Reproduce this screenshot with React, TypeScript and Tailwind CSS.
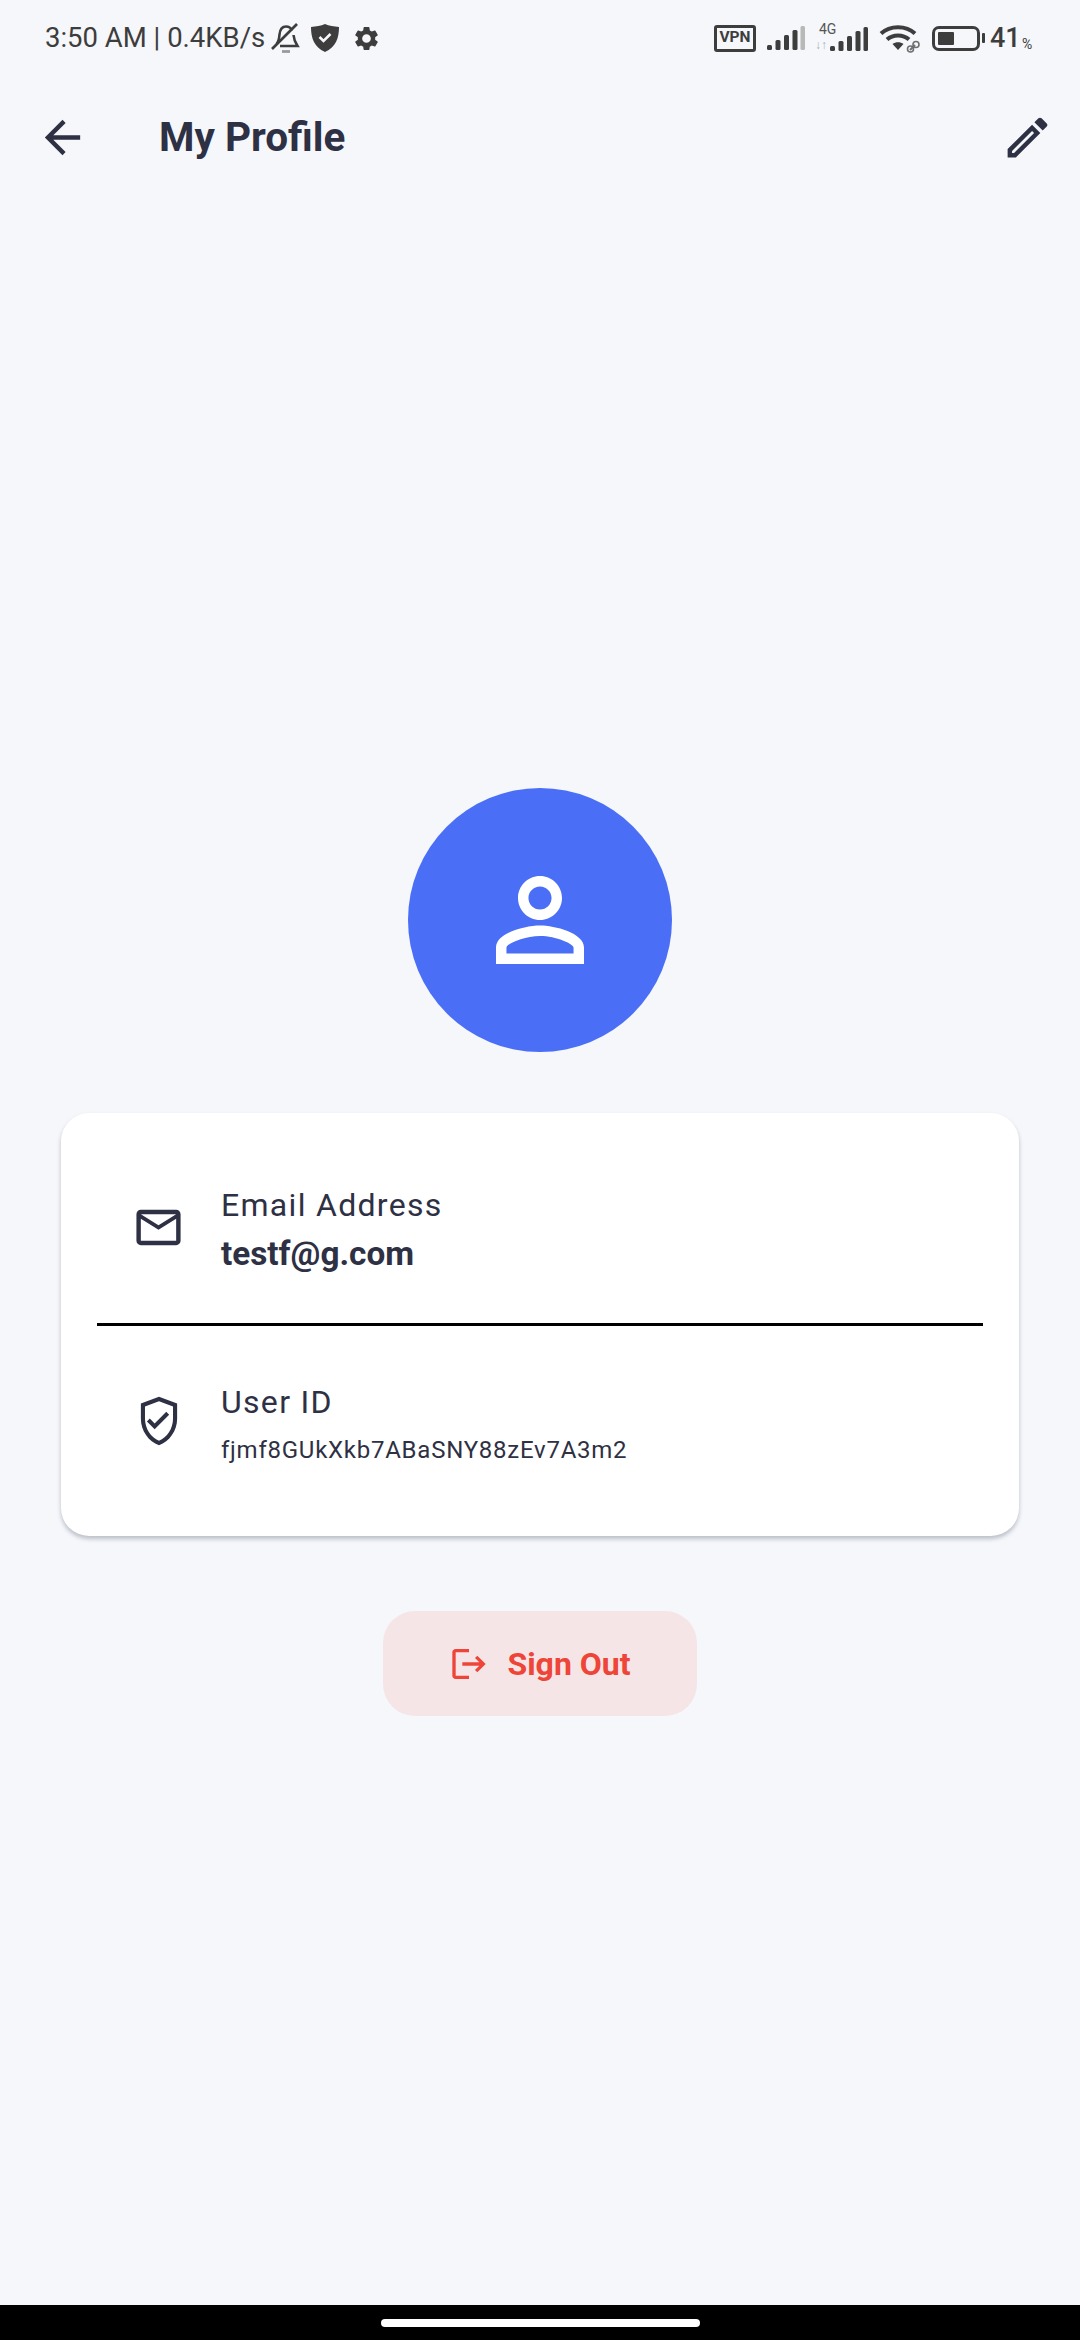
import React from 'react';

const Svg24 = ({ d, className }: { d: string; className: string }) => (
  <svg viewBox="0 0 24 24" fill="currentColor" className={className}>
    <path d={d} />
  </svg>
);

function BellOff() {
  return (
    <svg viewBox="0 0 30 32" className="w-[30px] h-[32px]" fill="none" stroke="#3d3d3d" strokeWidth="2.6">
      <path d="M6.500 22c2.500-3 2.700-6 3-9.500C10 7.500 12 4.500 16 4.500c3 0 5 1.500 6 4" />
      <path d="M23.500 13c.3 4 1.500 7 4 11H10" />
      <path d="M2 27 27 2" />
      <path d="M12 29.500h8" stroke="#9a9a9a" strokeWidth="2.800" />
    </svg>
  );
}

function StatusShield() {
  return (
    <svg viewBox="0 0 30 30" className="w-[30px] h-[30px]">
      <path d="M15 1c4 2 9 2.500 14 3 0 11-3 20-14 25C4 24 1 15 1 4c5-.5 10-1 14-3z" fill="#3d3d3d" />
      <path d="m9.500 14 4 4 7-7" fill="none" stroke="#f5f7fb" strokeWidth="2.500" />
    </svg>
  );
}

function Gear() {
  return (
    <Svg24
      className="w-[29px] h-[29px] text-[#3d3d3d]"
      d="M19.140 12.940c.04-.3.06-.61.06-.94 0-.32-.02-.64-.07-.94l2.030-1.580a.49.49 0 0 0 .12-.61l-1.920-3.320a.49.49 0 0 0-.59-.22l-2.390.96c-.5-.38-1.030-.7-1.620-.94l-.36-2.540a.48.48 0 0 0-.48-.41h-3.840a.47.47 0 0 0-.47.41l-.36 2.540c-.59.24-1.130.57-1.620.94l-2.390-.96a.48.48 0 0 0-.59.22L2.740 8.870a.47.47 0 0 0 .12.61l2.030 1.580c-.05.3-.09.63-.09.94s.02.64.07.94l-2.030 1.580a.49.49 0 0 0-.12.61l1.920 3.320c.12.22.37.29.59.22l2.390-.96c.5.38 1.030.7 1.620.94l.36 2.540c.05.24.24.41.48.41h3.840c.24 0 .44-.17.47-.41l.36-2.540c.59-.24 1.130-.56 1.620-.94l2.390.96c.22.08.47 0 .59-.22l1.920-3.320a.47.47 0 0 0-.12-.61l-2.010-1.580zM12 15.600A3.610 3.610 0 0 1 8.400 12 3.610 3.610 0 0 1 12 8.400a3.610 3.610 0 0 1 3.600 3.600 3.610 3.610 0 0 1-3.600 3.600z"
    />
  );
}

function Bars({ dimLast, className }: { dimLast?: boolean; className: string }) {
  return (
    <svg viewBox="0 0 38 24" className={className} fill="#3d3d3d">
      <rect x="0" y="19" width="5" height="5" rx="1.500" />
      <rect x="8.500" y="14" width="5" height="10" rx="1.500" />
      <rect x="17" y="9" width="5" height="15" rx="1.500" />
      <rect x="25.500" y="4" width="5" height="20" rx="1.500" />
      <rect x="33.500" y="0" width="4.500" height="24" rx="1.500" fill={dimLast ? '#b8b8b8' : '#3d3d3d'} />
    </svg>
  );
}

function Wifi() {
  return (
    <svg viewBox="0 0 42 30" className="w-[42px] h-[30px]" fill="none">
      <path d="M2 10.500C11 2 27 2 36 10.500" stroke="#3d3d3d" strokeWidth="4" />
      <path d="M8 16.500c6-5.500 16-5.500 22 0" stroke="#3d3d3d" strokeWidth="4" />
      <path d="M13.500 21c3-2.500 8-2.500 11 0L19 27z" fill="#3d3d3d" />
      <path d="m31 27 5-5" stroke="#707070" strokeWidth="2" />
      <circle cx="31.500" cy="26" r="3" stroke="#707070" strokeWidth="1.600" />
      <circle cx="37" cy="21.500" r="3" stroke="#707070" strokeWidth="1.600" />
    </svg>
  );
}

function StatusBar() {
  return (
    <div className="h-[76px] flex items-center justify-between pl-[45px] pr-[46px] text-[#3d3d3d]">
      <div className="flex items-center">
        <span className="text-[27.500px] leading-none w-[225px] whitespace-nowrap">3:50 AM | 0.4KB/s</span>
        <BellOff />
        <span className="ml-[10px]"><StatusShield /></span>
        <span className="ml-[12px]"><Gear /></span>
      </div>
      <div className="flex items-center">
        <div className="w-[42px] h-[27px] border-[3px] border-[#3d3d3d] rounded-[3px] flex items-center justify-center text-[15.500px] leading-none font-bold">VPN</div>
        <Bars dimLast className="w-[38px] h-[24px] ml-[11px]" />
        <div className="relative w-[53px] h-[26px] ml-[10px]">
          <span className="absolute left-[4px] -top-[3px] text-[14px] leading-none text-[#555555]">4G</span>
          <span className="absolute left-0 bottom-0 text-[12px] leading-none text-[#b0b0b0]">↓↑</span>
          <Bars className="absolute right-0 bottom-0 w-[38px] h-[24px]" />
        </div>
        <span className="ml-[11px]"><Wifi /></span>
        <div className="ml-[11px] w-[48px] h-[25px] border-[3px] border-[#3d3d3d] rounded-[7px] p-[3px]">
          <div className="w-[44%] h-full bg-[#3d3d3d] rounded-[1px]" />
        </div>
        <div className="ml-[2px] w-[3px] h-[10px] bg-[#3d3d3d] rounded-[1px]" />
        <span className="ml-[5px] w-[30px] text-[27px] leading-none font-medium">41</span>
        <span className="ml-[2px] w-[12px] text-[14px] leading-none self-end mb-[2px]">%</span>
      </div>
    </div>
  );
}

export default function App() {
  return (
    <div className="w-[1080px] h-[2340px] flex flex-col bg-[#f5f7fb] text-[#2e3044] font-['Roboto',sans-serif]">
      <StatusBar />

      <div className="h-[122px] flex items-center justify-between pl-[36px] pr-[26px]">
        <div className="flex items-center">
          <Svg24 className="w-[53px] h-[53px]" d="M20 11H7.830l5.590-5.590L12 4l-8 8 8 8 1.410-1.410L7.830 13H20v-2z" />
          <h1 className="ml-[70px] text-[40.500px] leading-none font-bold">My Profile</h1>
        </div>
        <Svg24
          className="w-[53px] h-[53px]"
          d="M14.060 9.020l.92.92L5.920 19H5v-.92l9.060-9.060M17.660 3c-.25 0-.51.1-.7.29l-1.830 1.830 3.750 3.750 1.830-1.830c.39-.39.39-1.020 0-1.410l-2.340-2.340c-.2-.2-.45-.29-.71-.29zm-3.600 3.190L3 17.250V21h3.750L17.810 9.940l-3.750-3.750z"
        />
      </div>

      <div className="flex-1 flex flex-col items-center pt-[590px]">
        <div className="w-[264px] h-[264px] rounded-full bg-[#4a6ef6] flex items-center justify-center text-white">
          <Svg24
            className="w-[132px] h-[132px]"
            d="M12 5.900c1.160 0 2.100.94 2.100 2.100s-.94 2.100-2.100 2.100S9.900 9.160 9.900 8s.94-2.100 2.100-2.100m0 9c2.970 0 6.100 1.460 6.100 2.100v1.100H5.900V17c0-.64 3.130-2.100 6.100-2.100M12 4C9.790 4 8 5.790 8 8s1.790 4 4 4 4-1.790 4-4-1.790-4-4-4zm0 9c-2.670 0-8 1.340-8 4v3h16v-3c0-2.660-5.330-4-8-4z"
          />
        </div>

        <div className="mt-[61px] w-[958px] h-[423px] bg-white rounded-[28px] px-[36px] shadow-[0_3px_4px_rgba(40,45,70,0.28)]">
          <div className="h-[210px] flex items-center pl-[35px] pt-[22px]">
            <Svg24
              className="w-[53px] h-[53px] shrink-0 mb-[4px]"
              d="M20 4H4c-1.100 0-1.990.9-1.990 2L2 18c0 1.100.9 2 2 2h16c1.100 0 2-.9 2-2V6c0-1.100-.9-2-2-2zm0 14H4V8l8 5 8-5v10zm-8-7L4 6h16l-8 5z"
            />
            <div className="ml-[36px] flex flex-col">
              <span className="text-[32px] leading-[48px] tracking-[1.300px]">Email Address</span>
              <span className="text-[33.300px] leading-[49px] font-bold">testf@g.com</span>
            </div>
          </div>
          <div className="h-[3px] bg-black" />
          <div className="h-[210px] flex items-center pl-[35px] pb-[10px]">
            <div className="w-[53px] flex justify-center shrink-0 mb-[10px]">
              <Svg24
                className="w-[58px] h-[58px] shrink-0"
                d="M12 2 4.500 4.800v6.300c0 4.900 3.200 9.500 7.500 10.900 4.300-1.400 7.500-6 7.500-10.900V4.800L12 2zm5.800 9.100c0 4-2.500 7.800-5.800 9.100-3.300-1.300-5.800-5.100-5.800-9.100V6l5.800-2.200L17.800 6v5.100zm-7.600 1.900-2-2-1.200 1.200 3.200 3.200 6-6-1.200-1.200-4.800 4.800z"
              />
            </div>
            <div className="ml-[36px] flex flex-col">
              <span className="text-[32px] leading-[48px] tracking-[1.300px]">User ID</span>
              <span className="text-[24px] leading-[48px] tracking-[0.750px]">fjmf8GUkXkb7ABaSNY88zEv7A3m2</span>
            </div>
          </div>
        </div>

        <button className="mt-[75px] w-[314px] h-[105px] rounded-[32px] bg-[#f5e5e7] flex items-center justify-center text-[#ee4538]">
          <Svg24
            className="w-[40px] h-[40px]"
            d="m17 7-1.410 1.410L18.170 11H8v2h10.170l-2.580 2.580L17 17l5-5zM4 5h8V3H4c-1.100 0-2 .9-2 2v14c0 1.100.9 2 2 2h8v-2H4V5z"
          />
          <span className="ml-[18px] text-[32px] leading-none font-bold">Sign Out</span>
        </button>
      </div>

      <div className="h-[35px] bg-black flex justify-center pt-[14px]">
        <div className="w-[319px] h-[8px] rounded-full bg-white" />
      </div>
    </div>
  );
}
